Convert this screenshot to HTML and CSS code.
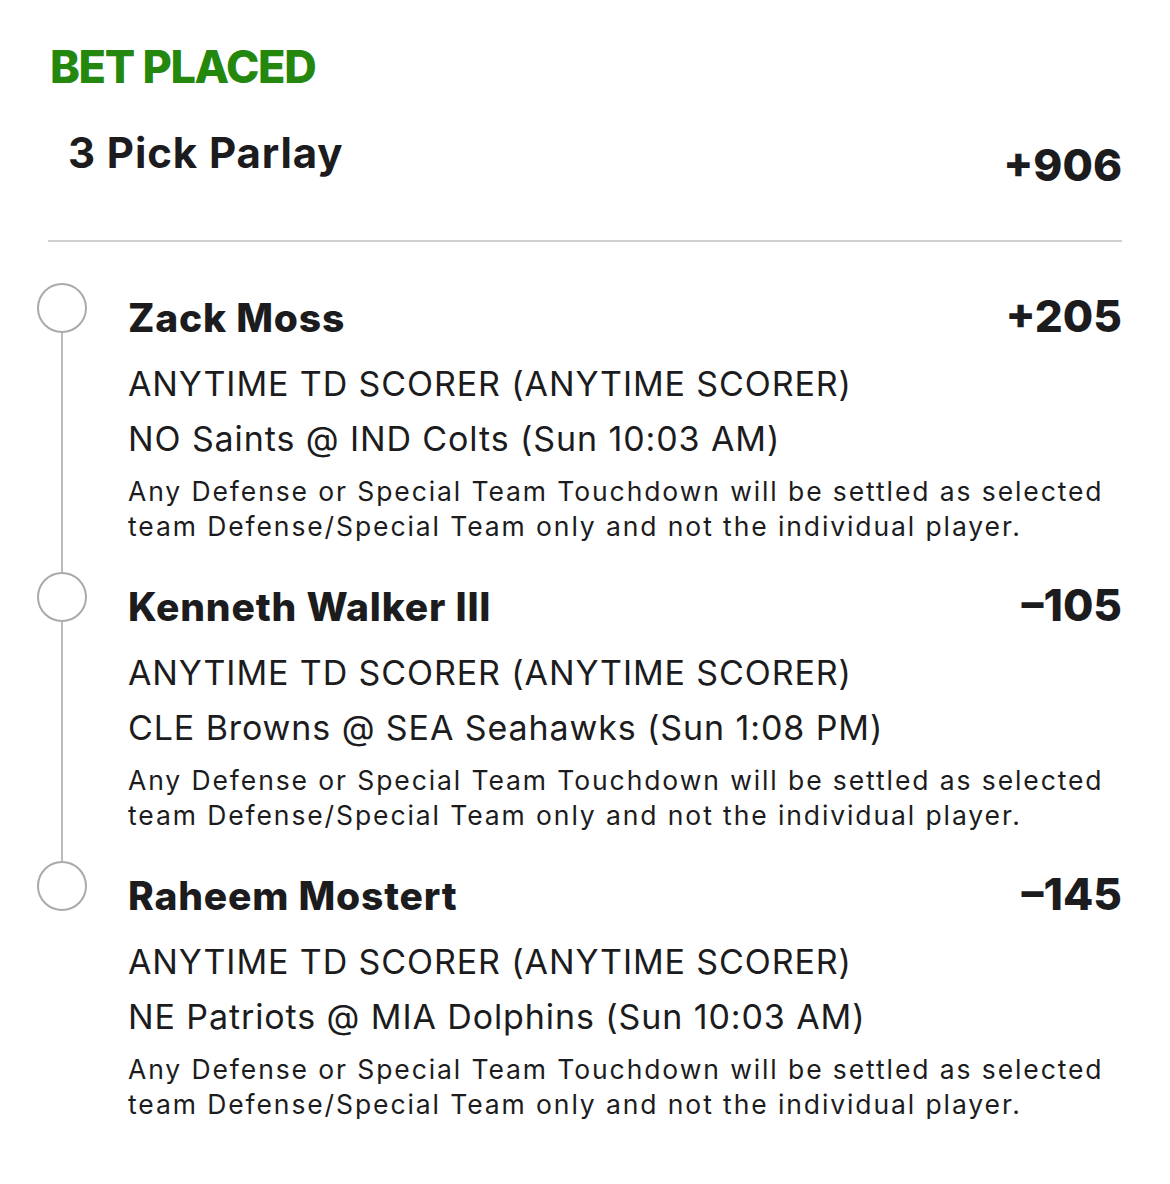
FILE: index.html
```html
<!DOCTYPE html>
<html lang="en">
<head>
  <meta charset="UTF-8" />
  <title>Bet Placed</title>
  <link rel="stylesheet" href="styles.css">
</head>
<body>
  <div class="slip">
    <h2 class="status">BET PLACED</h2>

    <div class="summary">
      <div class="summary-title">3 Pick Parlay</div>
      <div class="summary-odds">+906</div>
    </div>

    <div class="legs">
      <div class="leg">
        <div class="track">
          <span class="dot"></span>
          <span class="rail"></span>
        </div>
        <div class="leg-body">
          <div class="leg-head">
            <span class="player">Zack Moss</span>
            <span class="odds">+205</span>
          </div>
          <div class="market">ANYTIME TD SCORER (ANYTIME SCORER)</div>
          <div class="game">NO Saints @ IND Colts (Sun 10:03 AM)</div>
          <p class="note">Any Defense or Special Team Touchdown will be settled as selected team Defense/Special Team only and not the individual player.</p>
        </div>
      </div>

      <div class="leg">
        <div class="track">
          <span class="dot"></span>
          <span class="rail"></span>
        </div>
        <div class="leg-body">
          <div class="leg-head">
            <span class="player">Kenneth Walker III</span>
            <span class="odds">&ndash;105</span>
          </div>
          <div class="market">ANYTIME TD SCORER (ANYTIME SCORER)</div>
          <div class="game">CLE Browns @ SEA Seahawks (Sun 1:08 PM)</div>
          <p class="note">Any Defense or Special Team Touchdown will be settled as selected team Defense/Special Team only and not the individual player.</p>
        </div>
      </div>

      <div class="leg">
        <div class="track">
          <span class="dot"></span>
        </div>
        <div class="leg-body">
          <div class="leg-head">
            <span class="player">Raheem Mostert</span>
            <span class="odds">&ndash;145</span>
          </div>
          <div class="market">ANYTIME TD SCORER (ANYTIME SCORER)</div>
          <div class="game">NE Patriots @ MIA Dolphins (Sun 10:03 AM)</div>
          <p class="note">Any Defense or Special Team Touchdown will be settled as selected team Defense/Special Team only and not the individual player.</p>
        </div>
      </div>
    </div>
  </div>
</body>
</html>
```

FILE: styles.css
```css
body {
  margin: 0;
  background: #fff;
  color: #1c1c1e;
  font-family: Inter, "Liberation Sans", sans-serif;
}

.slip {
  padding: 40px 48px 40px 48px;
}

.status {
  margin: 0 0 0 2px;
  font-size: 45px;
  line-height: 54px;
  font-weight: 800;
  letter-spacing: -1.3px;
  color: #24880f;
}

.summary {
  display: flex;
  justify-content: space-between;
  align-items: flex-start;
  padding: 34px 0 50px 20px;
  border-bottom: 2px solid #d0d0d0;
}

.summary-title {
  font-size: 42px;
  line-height: 50px;
  font-weight: 700;
  letter-spacing: 0.9px;
}

.summary-odds {
  margin-top: 12px;
  font-size: 44px;
  line-height: 50px;
  font-weight: 800;
}

.legs {
  margin-top: 41px;
  margin-left: -11px;
}

.leg {
  display: flex;
  gap: 41px;
}

/* timeline: ring + connecting rail */
.track {
  width: 50px;
  display: flex;
  flex-direction: column;
  align-items: center;
  flex-shrink: 0;
}

.dot {
  width: 46px;
  height: 46px;
  border: 2px solid #aaa;
  border-radius: 50%;
  flex-shrink: 0;
}

.rail {
  flex: 1;
  width: 2px;
  background: #bbb;
}

.leg-body {
  flex: 1;
  padding-top: 9px;
  padding-bottom: 28px;
}

.leg-head {
  display: flex;
  justify-content: space-between;
  align-items: baseline;
}

.player {
  font-size: 39px;
  line-height: 48px;
  font-weight: 800;
  letter-spacing: 0.8px;
}

.odds {
  font-size: 44px;
  line-height: 48px;
  font-weight: 800;
}

.market,
.game {
  font-size: 34px;
  line-height: 55px;
  letter-spacing: 0.9px;
}

.market {
  margin-top: 14px;
}

.note {
  margin: 8px 0 0;
  font-size: 26.5px;
  line-height: 35px;
  letter-spacing: 1.9px;
}
```
